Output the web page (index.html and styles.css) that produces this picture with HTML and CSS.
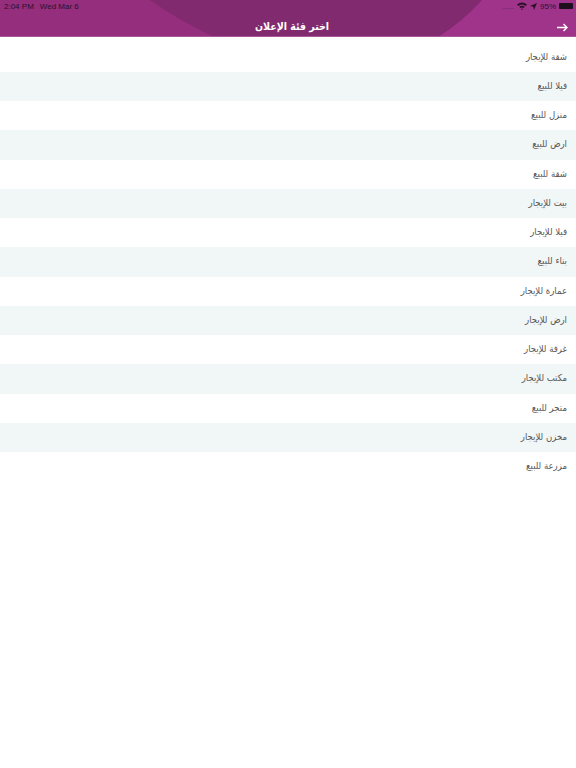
FILE: index.html
```html
<!DOCTYPE html>
<html lang="ar">
<head>
    <meta charset="UTF-8">
    <meta name="viewport" content="width=device-width, initial-scale=1.0">
    <title>اختر فئة الإعلان</title>
    <link rel="stylesheet" href="styles.css">
</head>
<body>
    <header class="top-bar">
        <svg class="top-bar-bg" width="576" height="37" viewBox="0 0 576 37">
            <path d="M0 0H576V37H0Z" fill="#942e7d"/>
            <path d="M438 37H576V0H482Q463 21 438 37Z" fill="#a0348a"/>
            <path d="M150 0Q178 20 214 37H438Q463 21 482 0Z" fill="#822a6f"/>
            <path d="M0 36.5H576" stroke="#a85a96" stroke-width="1"/>
        </svg>
        <div class="status-bar" dir="ltr">
            <span class="status-time">2:04 PM</span>
            <span class="status-date">Wed Mar 6</span>
            <span class="status-right">
                <span class="signal-dots">.....</span>
                <svg width="10" height="8" viewBox="0 0 10 8"><path d="M0 2.6Q5-1.6 10 2.6L8.8 3.9Q5 .9 1.2 3.9ZM2.2 4.8Q5 2.6 7.8 4.8L6.6 6Q5 4.9 3.4 6ZM4 6.9Q5 6.2 6 6.9L5 8Z" fill="#2c1228"/></svg>
                <svg width="7" height="7" viewBox="0 0 7 7"><path d="M7 0L4 7 3.2 3.8 0 3Z" fill="#2c1228"/></svg>
                <span>95%</span>
                <span class="battery"><span class="battery-fill"></span></span>
            </span>
        </div>
        <div class="nav-row">
            <h1 class="nav-title">اختر فئة الإعلان</h1>
            <svg class="nav-arrow" width="11" height="9" viewBox="0 0 11 9"><path d="M0 4.5H10M6.5 1L10 4.5 6.5 8" fill="none" stroke="#fff" stroke-width="1.4"/></svg>
        </div>
    </header>
    <ul class="category-list" dir="rtl">
        <li>شقة للإيجار</li>
        <li>فيلا للبيع</li>
        <li>منزل للبيع</li>
        <li>ارض للبيع</li>
        <li>شقة للبيع</li>
        <li>بيت للإيجار</li>
        <li>فيلا للإيجار</li>
        <li>بناء للبيع</li>
        <li>عمارة للإيجار</li>
        <li>ارض للإيجار</li>
        <li>غرفة للإيجار</li>
        <li>مكتب للإيجار</li>
        <li>متجر للبيع</li>
        <li>مخزن للإيجار</li>
        <li>مزرعة للبيع</li>
    </ul>
</body>
</html>
```
FILE: styles.css
```css
body {
    margin: 0;
    background-color: #fff;
    font-family: "DejaVu Sans", "Noto Sans", sans-serif;
    font-stretch: condensed;
}

.top-bar {
    position: relative;
    height: 37px;
    overflow: hidden;
}

.top-bar-bg {
    position: absolute;
    top: 0;
    left: 0;
}

.status-bar {
    position: relative;
    display: flex;
    align-items: center;
    height: 12px;
    padding: 0 2px 0 4px;
    font-family: "Liberation Sans", sans-serif;
    font-size: 8px;
    color: #2c1228;
}

.status-date {
    margin-left: 6px;
}

.status-right {
    display: flex;
    align-items: center;
    gap: 3px;
    margin-left: auto;
}

.signal-dots {
    opacity: 0.6;
}

.battery {
    display: flex;
    width: 14px;
    height: 6px;
    padding: 0 1px 0 0;
}

.battery-fill {
    flex: 1;
    background-color: #1d0f1b;
    border-radius: 1px;
}

.nav-row {
    position: relative;
    display: flex;
    justify-content: center;
    align-items: center;
    height: 25px;
    padding-top: 1px;
    padding-left: 8px;
}

.nav-title {
    margin: 0;
    font-size: 10.5px;
    font-weight: 700;
    color: #fff;
}

.nav-arrow {
    position: absolute;
    right: 8px;
    top: 11px;
}

.category-list {
    margin: 0;
    padding: 5.5px 0 0;
    list-style: none;
}

.category-list li {
    height: 29.25px;
    line-height: 27px;
    padding-right: 9px;
    font-size: 9.5px;
    color: #555;
}

.category-list li:nth-child(even) {
    background-color: #f1f6f6;
}
```
